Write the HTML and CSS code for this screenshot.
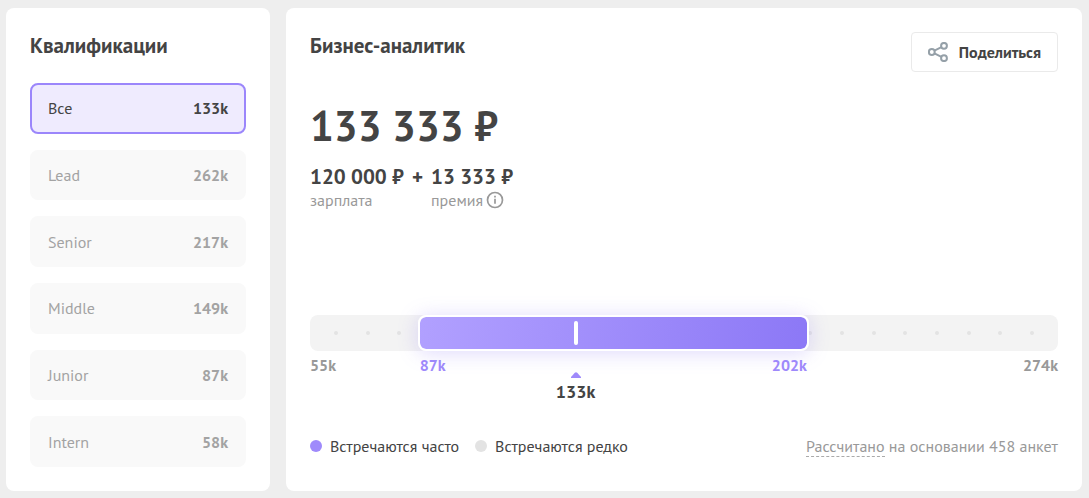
FILE: index.html
```html
<!DOCTYPE html>
<html lang="ru">
<head>
<meta charset="utf-8">
<meta name="viewport" content="width=device-width, initial-scale=1">
<title>Бизнес-аналитик</title>
<link rel="stylesheet" href="styles.css">
</head>
<body>
<div class="page">
  <aside class="card levels">
    <h2 class="title">Квалификации</h2>
    <div class="level-list">
      <button type="button" class="level level-active" aria-pressed="true"><span>Все</span><b>133k</b></button>
      <button type="button" class="level"><span>Lead</span><b>262k</b></button>
      <button type="button" class="level"><span>Senior</span><b>217k</b></button>
      <button type="button" class="level"><span>Middle</span><b>149k</b></button>
      <button type="button" class="level"><span>Junior</span><b>87k</b></button>
      <button type="button" class="level"><span>Intern</span><b>58k</b></button>
    </div>
  </aside>
  <main class="card salary">
    <header class="head">
      <h1 class="title">Бизнес-аналитик</h1>
      <button type="button" class="share">
        <svg class="share-icon" viewBox="0 0 20 20" width="20" height="20" fill="none" stroke="currentColor" stroke-width="2" aria-hidden="true">
          <circle cx="3.8" cy="10" r="2.9"/><circle cx="16" cy="3.8" r="2.9"/><circle cx="16" cy="16.2" r="2.9"/>
          <path d="M6.4 8.7l7-3.6M6.4 11.3l7 3.6"/>
        </svg>
        Поделиться
      </button>
    </header>
    <p class="total">133 333 ₽</p>
    <div class="parts">
      <div class="part"><b class="amount">120 000 ₽</b><span class="note">зарплата</span></div>
      <b class="amount">+</b>
      <div class="part"><b class="amount">13 333 ₽</b>
        <span class="note">премия
          <svg viewBox="0 0 18 18" width="18" height="18" fill="none" stroke="currentColor" stroke-width="1.7" aria-hidden="true"><circle cx="9" cy="9" r="7.5"/><path d="M9 7.8v5M9 4.8v1.7"/></svg>
        </span>
      </div>
    </div>
    <section class="range" aria-label="Диапазон зарплат">
      <div class="track">
        <div class="dots"><i></i><i></i><i></i><i></i><i></i><i></i><i></i><i></i><i></i><i></i><i></i><i></i><i></i><i></i><i></i><i></i><i></i><i></i><i></i><i></i><i></i><i></i><i></i></div>
        <div class="fill"><span class="marker"></span></div>
      </div>
      <div class="scale">
        <span>55k</span>
        <div class="frequent"><span>87k</span><span>202k</span></div>
        <span class="max">274k</span>
      </div>
      <div class="median">
        <svg viewBox="0 0 10 6" width="10" height="6" fill="currentColor" aria-hidden="true"><path d="M0 6V5L3.8 .8Q5-.4 6.2 .8L10 5V6z"/></svg>
        <b>133k</b>
      </div>
    </section>
    <footer class="foot">
      <span class="key">Встречаются часто</span>
      <span class="key key-rare">Встречаются редко</span>
      <span class="basis"><a href="#" class="link">Рассчитано</a> на основании 458 анкет</span>
    </footer>
  </main>
</div>
</body>
</html>
```
FILE: styles.css
```css
* { box-sizing: border-box; }

body {
  margin: 0;
  background: #eee;
  color: #444;
  font: 16px/20px "PT Sans", "Noto Sans", sans-serif;
}

button { font: inherit; cursor: pointer; }
h1, h2, p { margin: 0; }

.page {
  display: grid;
  grid-template-columns: 264px 1fr;
  gap: 16px;
  min-height: 100vh;
  padding: 8px 7px 7px 6px;
}

.card {
  display: flex;
  flex-direction: column;
  padding: 24px;
  border-radius: 8px;
  background: #fff;
}

.title { font-size: 21px; line-height: 28px; font-weight: 700; }

.level-list {
  display: flex;
  flex: 1;
  flex-direction: column;
  gap: 16px;
  margin-top: 23px;
}

.level {
  display: flex;
  flex: 1;
  align-items: center;
  justify-content: space-between;
  padding: 0 16px;
  border: 2px solid #f9f9f9;
  border-radius: 8px;
  background: #f9f9f9;
  color: #a3a3a3;
}

.level-active { border-color: #9b86fb; background: #efebfe; color: #444; }

.head { display: flex; justify-content: space-between; align-items: flex-start; }

.share {
  display: flex;
  align-items: center;
  gap: 11px;
  height: 40px;
  padding: 0 16px;
  border: 1px solid #eaeaea;
  border-radius: 4px;
  background: #fff;
  color: #444;
  font-weight: 700;
}

.share-icon { color: #95a0a8; }

.total { margin-top: 28px; font-size: 42px; line-height: 52px; font-weight: 700; }

.parts { display: flex; gap: 8px; margin-top: 13px; }
.part { display: flex; flex-direction: column; }
.amount { font-size: 21px; line-height: 24px; }
.note { display: flex; align-items: center; gap: 3px; line-height: 22px; color: #999; }

.range { margin-top: 104px; }

.track {
  display: grid;
  grid-template-columns: 14.4% 52.3% 1fr;
  height: 36px;
  border-radius: 8px;
  background: #f3f3f3;
}

.dots {
  display: flex;
  grid-area: 1 / 1 / 2 / 4;
  align-items: center;
  justify-content: space-between;
  padding: 0 24px;
}

.dots i { width: 4px; height: 4px; border-radius: 50%; background: #e3e3e3; }

.fill {
  position: relative;
  grid-area: 1 / 2 / 2 / 3;
  border: 2px solid #fff;
  border-radius: 8px;
  background: linear-gradient(100deg, #b1a0ff, #8c78f6) padding-box;
  box-shadow: 0 2px 20px rgba(140, 120, 246, .28);
}

.marker {
  position: absolute;
  top: 4px;
  bottom: 4px;
  left: 39.8%;
  width: 4px;
  border-radius: 2px;
  background: #fff;
}

.scale {
  display: grid;
  grid-template-columns: 14.4% 52.3% 1fr;
  margin-top: 4px;
  color: #999;
  font-weight: 700;
}

.frequent { display: flex; justify-content: space-between; padding: 0 2px; color: #9f8afb; }
.max { text-align: right; }

.median {
  display: flex;
  flex-direction: column;
  align-items: center;
  width: 71%;
  font-size: 18px;
}

.median svg { margin: -3px 0 4px; color: #9f8afb; }

.foot { display: flex; align-items: center; gap: 16px; margin-top: auto; padding-bottom: 9px; line-height: 24px; }
.key { display: flex; align-items: center; gap: 8px; }
.key::before { content: ""; width: 12px; height: 12px; border-radius: 50%; background: #9f8afb; }
.key-rare::before { background: #e3e3e3; }
.basis { margin-left: auto; color: #999; }
.link { border-bottom: 1px dashed #aaa; color: inherit; text-decoration: none; }
```
